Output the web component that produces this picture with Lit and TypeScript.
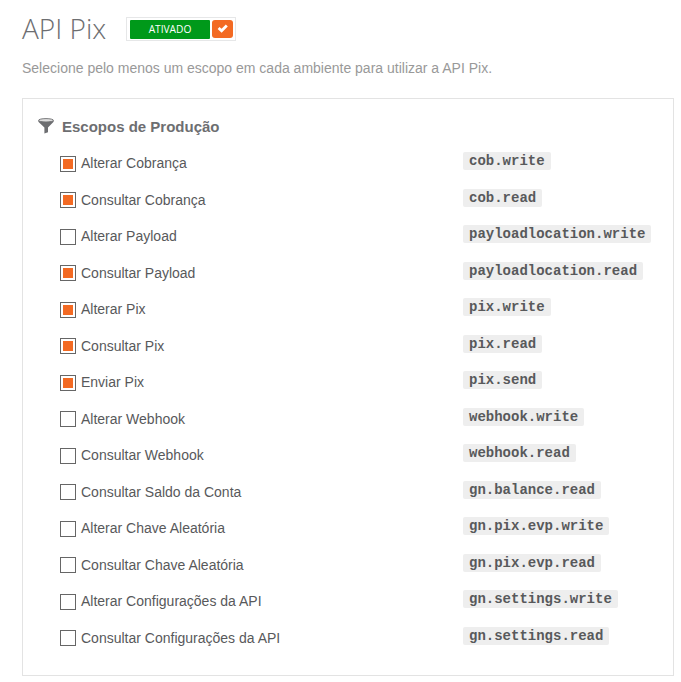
import { LitElement, html, css } from "lit";
import { customElement } from "lit/decorators.js";

interface Scope {
  label: string;
  code: string;
  on: boolean;
}

const scopes: Scope[] = [
  { label: "Alterar Cobrança", code: "cob.write", on: true },
  { label: "Consultar Cobrança", code: "cob.read", on: true },
  { label: "Alterar Payload", code: "payloadlocation.write", on: false },
  { label: "Consultar Payload", code: "payloadlocation.read", on: true },
  { label: "Alterar Pix", code: "pix.write", on: true },
  { label: "Consultar Pix", code: "pix.read", on: true },
  { label: "Enviar Pix", code: "pix.send", on: true },
  { label: "Alterar Webhook", code: "webhook.write", on: false },
  { label: "Consultar Webhook", code: "webhook.read", on: false },
  { label: "Consultar Saldo da Conta", code: "gn.balance.read", on: false },
  { label: "Alterar Chave Aleatória", code: "gn.pix.evp.write", on: false },
  { label: "Consultar Chave Aleatória", code: "gn.pix.evp.read", on: false },
  { label: "Alterar Configurações da API", code: "gn.settings.write", on: false },
  { label: "Consultar Configurações da API", code: "gn.settings.read", on: false },
];

@customElement("app-root")
export class AppRoot extends LitElement {
  static styles = css`
    :host {
      display: block;
      box-sizing: border-box;
      height: 682px;
      padding: 12px 7px 0 22px;
      background: #fff;
      color: #58595b;
      font-family: "Liberation Sans", Arial, sans-serif;
      font-size: 14px;
      overflow: hidden;
    }
    .head {
      display: flex;
      align-items: center;
      height: 34px;
    }
    h1 {
      margin: 0 0 2px;
      width: 104px;
      font: 300 28px/34px "Open Sans", sans-serif;
      color: #6d6e71;
      white-space: nowrap;
    }
    .switch {
      display: flex;
      align-items: flex-start;
      gap: 2px;
      box-sizing: border-box;
      width: 110px;
      height: 24px;
      padding: 2px 2px 0 3px;
      border: 1px solid #e6e7e8;
    }
    .state {
      width: 80px;
      height: 19px;
      border-radius: 1px;
      background: #00991a;
      color: #fff;
      font: 500 10.2px/19px "Open Sans", sans-serif;
      text-align: center;
    }
    .knob {
      display: flex;
      align-items: center;
      justify-content: center;
      width: 21px;
      height: 18px;
      border-radius: 3px;
      background: #f36a23;
    }
    .lead {
      margin: 12px 0 0;
      height: 20px;
      line-height: 20px;
      color: #999;
    }
    .panel {
      box-sizing: border-box;
      margin-top: 20px;
      width: 652px;
      height: 578px;
      padding: 18px 0 0 15px;
      border: 1px solid #e3e3e3;
    }
    h2 {
      display: flex;
      align-items: center;
      gap: 8px;
      margin: 0 0 8px;
      height: 20px;
      font-size: 15px;
      line-height: 20px;
      color: #6d6e71;
    }
    .funnel {
      margin-bottom: 3px;
    }
    .row {
      display: flex;
      align-items: center;
      height: 36.5px;
      padding-left: 22px;
    }
    .box {
      box-sizing: border-box;
      width: 16px;
      height: 16px;
      margin: 1px 5px 0 0;
      padding: 2px;
      border: 1px solid #666;
      background: #fff;
    }
    .box.on {
      background: #f36a23 content-box;
    }
    .label {
      width: 382px;
      line-height: 18px;
    }
    code {
      height: 18px;
      margin-bottom: 4.4px;
      padding: 0 6px;
      border-radius: 2px;
      background: #eee;
      font: bold 14px/18px "Courier New", "Liberation Mono", monospace;
    }
  `;

  render() {
    return html`
      <header class="head">
        <h1>API Pix</h1>
        <div class="switch">
          <span class="state">ATIVADO</span>
          <span class="knob">
            <svg width="12" height="10" viewBox="0 0 12 10">
              <path d="M1.6 4 L4.6 6.8 L9.8 1.6" fill="none" stroke="#fff" stroke-width="2.8" />
            </svg>
          </span>
        </div>
      </header>
      <p class="lead">Selecione pelo menos um escopo em cada ambiente para utilizar a API Pix.</p>
      <section class="panel">
        <h2>
          <svg class="funnel" width="16" height="16" viewBox="0 0 16 16">
            <path fill="#6d6e71" d="M0 2.5 L16 2.5 L15.4 4 L10 9.6 V14.2 L6.400 15.600 V9.600 L0.600 4 Z" />
            <ellipse cx="8" cy="2.300" rx="7.500" ry="1.700" fill="#dedede" stroke="#6d6e71" stroke-width="0.900" />
          </svg>
          Escopos de Produção
        </h2>
        ${scopes.map(
          (s) => html`<div class="row">
            <span class="box ${s.on ? "on" : ""}"></span>
            <span class="label">${s.label}</span>
            <code>${s.code}</code>
          </div>`
        )}
      </section>
    `;
  }
}
